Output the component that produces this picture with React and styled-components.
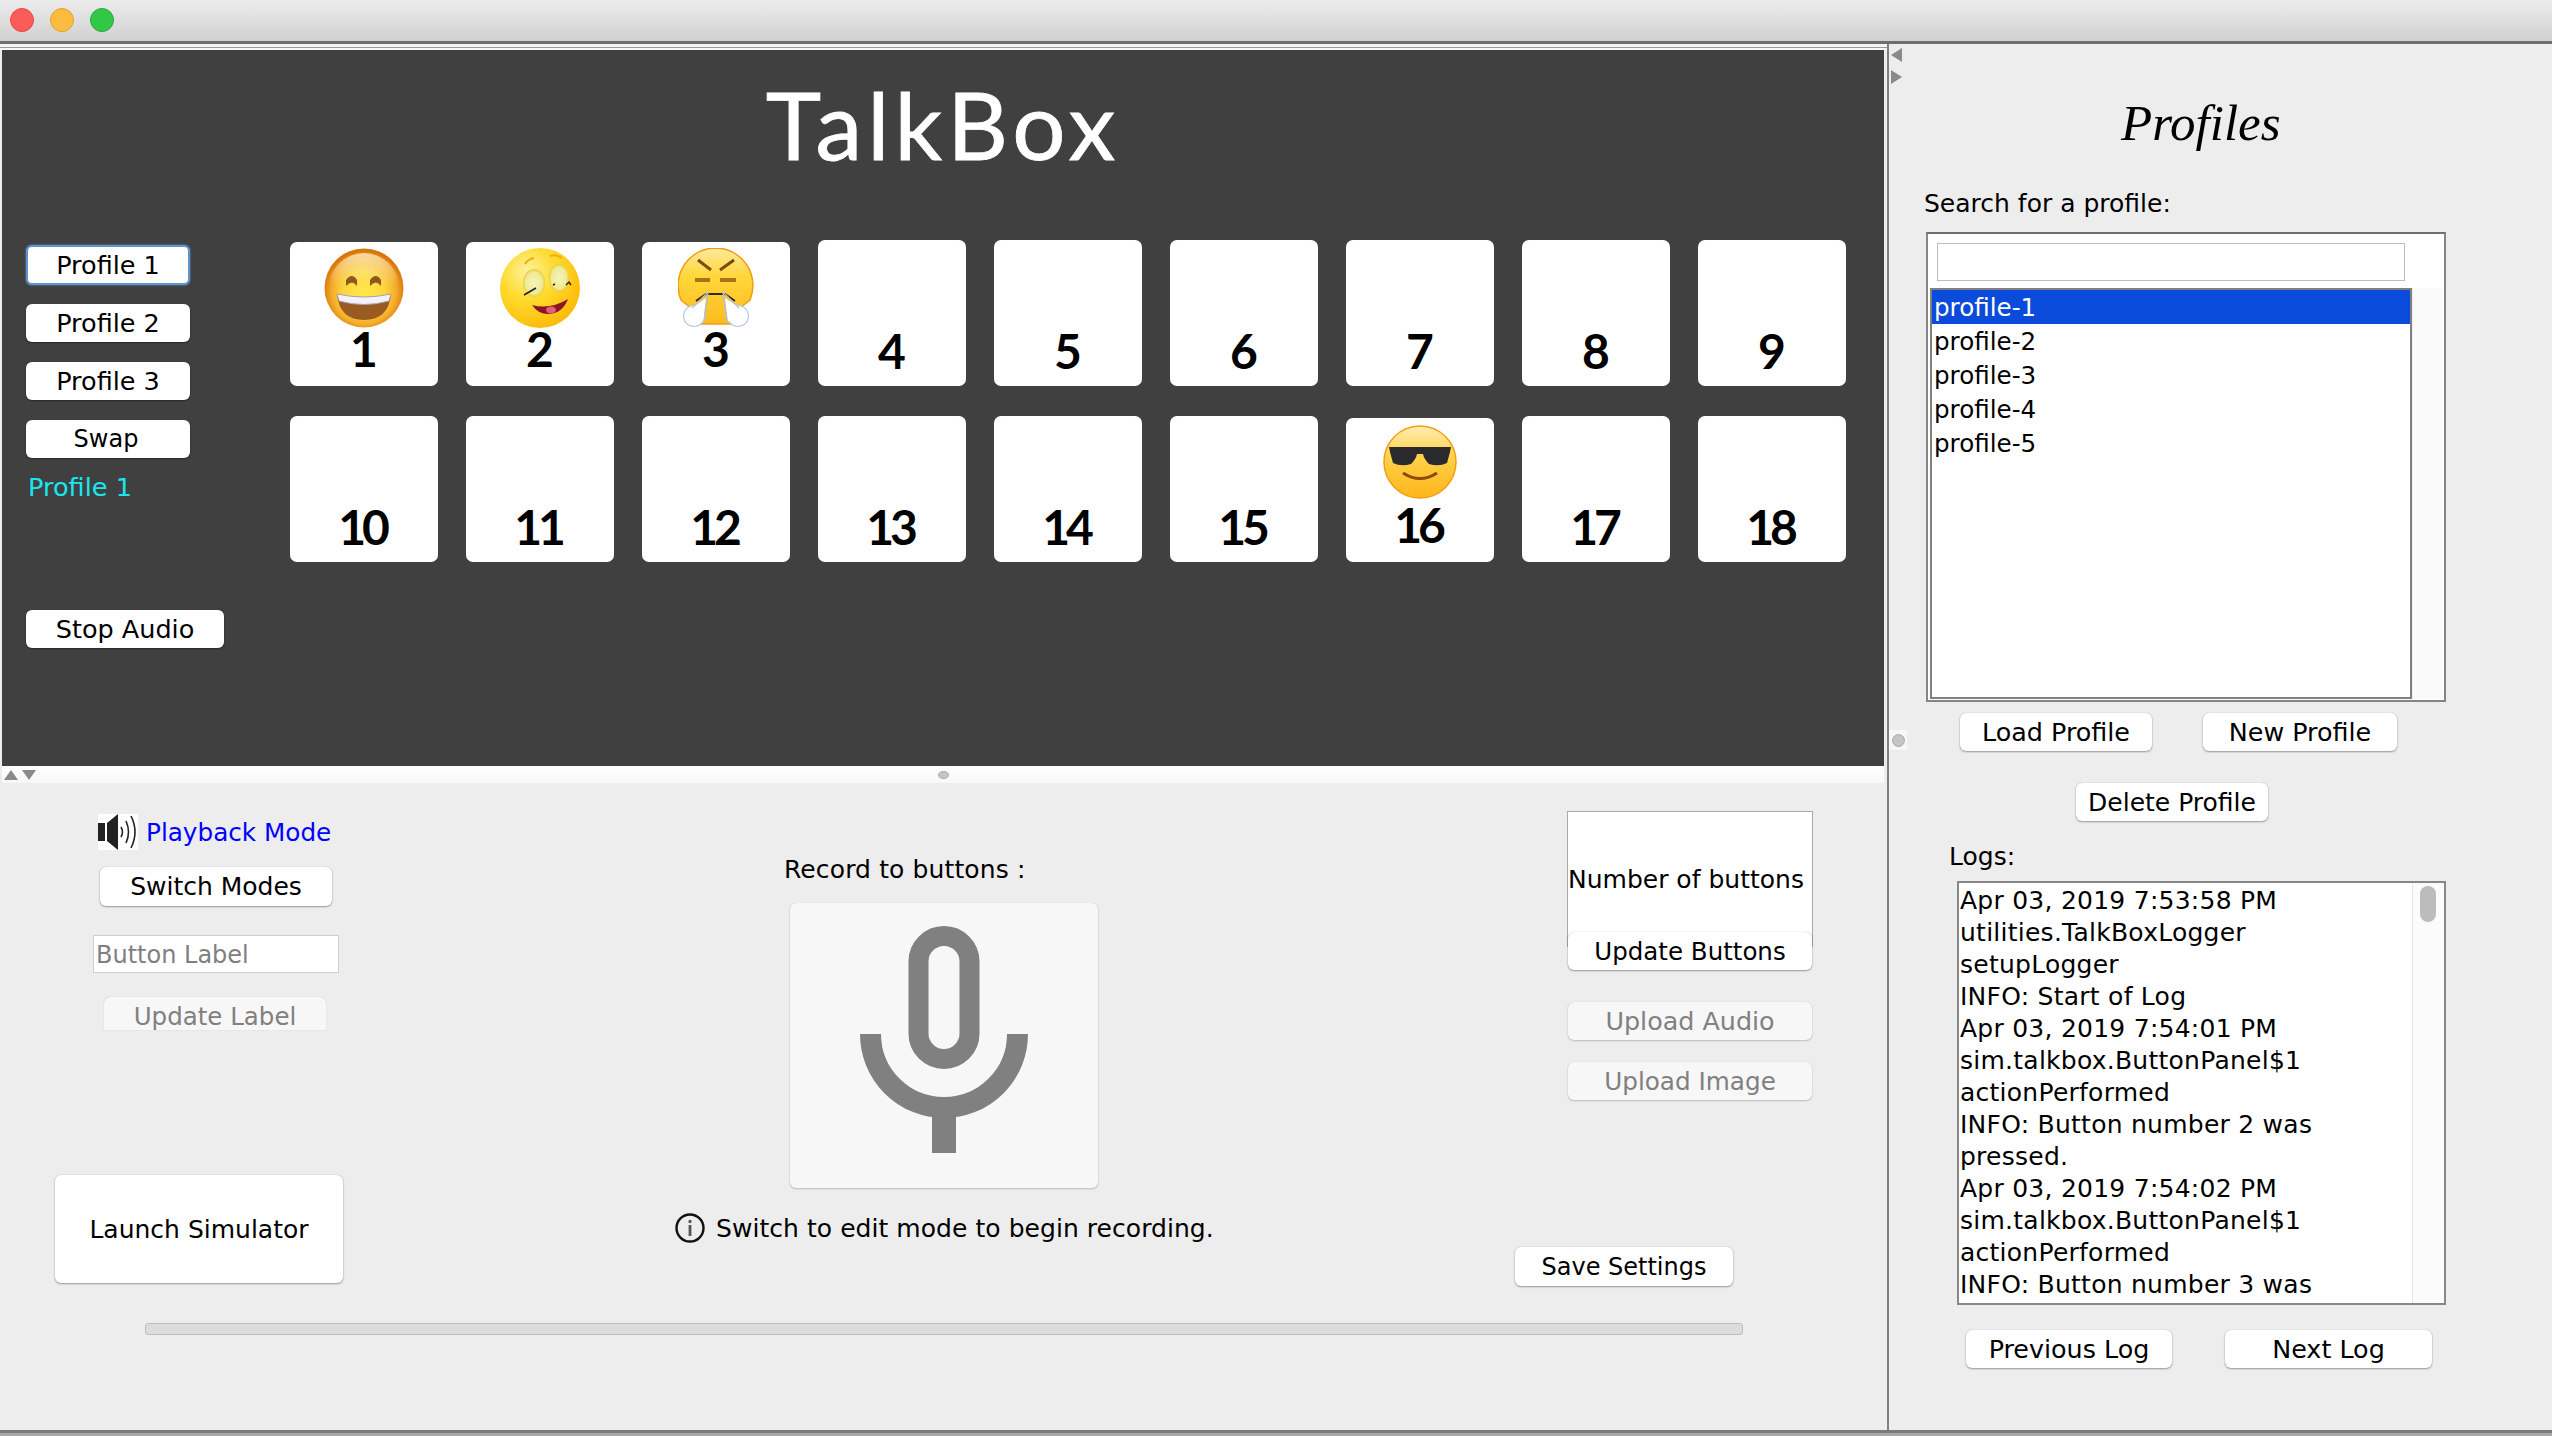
import styled, { createGlobalStyle } from "styled-components";

const GlobalStyle = createGlobalStyle`
  html, body {
    margin: 0;
    padding: 0;
    background: #ededed;
    overflow: hidden;
  }
  * {
    box-sizing: border-box;
  }
`;

const Window = styled.div`
  width: 2552px;
  height: 1436px;
  display: flex;
  flex-direction: column;
  padding-bottom: 3px;
  font-family: "DejaVu Sans", sans-serif;
  font-size: 25px;
  color: #000;
  background: #a8a8a8;
  overflow: hidden;
`;

const TitleBar = styled.div`
  height: 44px;
  flex: none;
  display: flex;
  align-items: flex-start;
  gap: 16px;
  padding: 8px 0 0 10px;
  background: linear-gradient(#ececec, #d0d0d0);
  border-bottom: 3px solid #6f6f6f;
`;

const Light = styled.span`
  width: 24px;
  height: 24px;
  border-radius: 50%;
  background: ${(p) => p.$color};
  border: 1px solid ${(p) => p.$edge};
`;

const Body = styled.div`
  flex: 1;
  display: flex;
  min-height: 0;
  border-bottom: 3px solid #7a7a7a;
`;

const LeftPane = styled.div`
  width: 1889px;
  flex: none;
  display: flex;
  flex-direction: column;
  padding: 6px 3px 0 2px;
  background: linear-gradient(#f6f6f6 3px, #9a9a9a 3px, #9a9a9a 4px, #f6f6f6 4px) no-repeat 0 0 / 100% 6px, #ededed;
  border-right: 2px solid #808080;
`;

/* top dark board */
const Board = styled.div`
  height: 716px;
  flex: none;
  padding: 24px 0 0 24px;
  background: #404040;
`;

const AppTitle = styled.h1`
  margin: 0 0 66px -24px;
  height: 100px;
  font-family: Lato, sans-serif;
  font-size: 94px;
  line-height: 100px;
  font-weight: 400;
  letter-spacing: 5px;
  text-align: center;
  color: #fff;
  -webkit-text-stroke: 0.8px #fff;
`;

const BoardRow = styled.div`
  display: flex;
`;

const SideColumn = styled.div`
  width: 264px;
  flex: none;
  display: flex;
  flex-direction: column;
  align-items: flex-start;
  padding-top: 5px;
`;

const Btn = styled.div`
  flex: none;
  display: flex;
  align-items: center;
  justify-content: center;
  width: ${(p) => p.$w}px;
  height: ${(p) => p.$h || 38}px;
  margin-left: ${(p) => p.$ml || 0}px;
  margin-top: ${(p) => p.$mt || 0}px;
  padding-right: ${(p) => p.$pr || 0}px;
  font-size: ${(p) => p.$fs || 25}px;
  background: #fff;
  border-radius: 6px;
  box-shadow: 0 1px 2px rgba(0, 0, 0, 0.35), 0 0 1px rgba(0, 0, 0, 0.25);
  white-space: nowrap;
`;

const FocusBtn = styled(Btn)`
  border: 2px solid #5f92d2;
  box-shadow: 0 0 2px #7fa9dd;
`;

const MutedBtn = styled(Btn)`
  background: #f7f7f7;
  color: #808080;
  box-shadow: 0 1px 2px rgba(0, 0, 0, 0.2), 0 0 1px rgba(0, 0, 0, 0.15);
`;

const ClippedBtn = styled(MutedBtn)`
  padding-top: 5px;
  border-radius: 6px 6px 0 0;
  box-shadow: 0 0 1px rgba(0, 0, 0, 0.25);
`;

const CurrentProfile = styled.div`
  margin: 14px 0 0 2px;
  height: 30px;
  line-height: 30px;
  font-size: 25.6px;
  color: #19e6ee;
`;

const CardGrid = styled.div`
  display: grid;
  grid-template-columns: repeat(9, 148px);
  grid-auto-rows: 146px;
  column-gap: 28px;
  row-gap: 30px;
`;

const Card = styled.div`
  align-self: end;
  height: ${(p) => (p.$short ? 144 : 146)}px;
  display: flex;
  flex-direction: column;
  align-items: center;
  justify-content: flex-end;
  padding-bottom: ${(p) => (p.$short ? 13 : 11)}px;
  background: #fff;
  border-radius: 7px;
`;

const CardNumber = styled.div`
  height: 48px;
  font-family: Lato, sans-serif;
  font-weight: 700;
  font-size: 48px;
  line-height: 48px;
  letter-spacing: ${(p) => (p.$wide ? -4 : 0)}px;
  padding-right: ${(p) => (p.$wide ? 4 : 0)}px;
`;

const EmojiSlot = styled.div`
  display: flex;
  margin-bottom: ${(p) => p.$gap}px;
`;

/* splitter under the board */
const Splitter = styled.div`
  height: 17px;
  flex: none;
  display: flex;
  align-items: center;
  gap: 4px;
  padding-left: 2px;
  position: relative;
  background: linear-gradient(#ffffff, #f7f7f7);
`;

const SplitDot = styled.span`
  position: absolute;
  left: 936px;
  top: 5px;
  width: 11px;
  height: 8px;
  border-radius: 50%;
  background: #c4c4c4;
  border: 1px solid #aaa;
`;

const Lower = styled.div`
  flex: 1;
  display: flex;
  flex-direction: column;
  min-height: 0;
`;

const LowerRow = styled.div`
  display: flex;
  align-items: flex-start;
`;

const LeftCol = styled.div`
  width: 673px;
  flex: none;
  display: flex;
  flex-direction: column;
`;

const ModeRow = styled.div`
  display: flex;
  align-items: center;
  gap: 8px;
  height: 36px;
  margin: 31px 0 0 96px;
  font-size: 24.7px;
  color: #0000ff;
`;

const LabelField = styled.div`
  width: 246px;
  height: 38px;
  margin: 29px 0 0 91px;
  padding-left: 2px;
  font-size: 24px;
  line-height: 38px;
  background: #fff;
  border: 1px solid #cfcfcf;
  color: #808080;
`;

const MidCol = styled.div`
  width: 840px;
  flex: none;
  display: flex;
  flex-direction: column;
`;

const RecordLabel = styled.div`
  height: 30px;
  line-height: 33px;
  margin: 70px 0 0 109px;
  letter-spacing: 0.12px;
`;

const MicCard = styled.div`
  width: 308px;
  height: 285px;
  margin: 20px 0 0 115px;
  padding-top: 23px;
  display: flex;
  justify-content: center;
  align-items: flex-start;
  background: #f7f7f7;
  border-radius: 6px;
  box-shadow: 0 1px 2px rgba(0, 0, 0, 0.2), 0 0 1px rgba(0, 0, 0, 0.15);
`;

const InfoRow = styled.div`
  display: flex;
  align-items: center;
  gap: 11px;
  height: 30px;
  margin-top: 25px;
  letter-spacing: 0.05px;
  white-space: nowrap;
`;

const RightCol = styled.div`
  width: 300px;
  flex: none;
  display: flex;
  flex-direction: column;
  align-items: flex-start;
`;

const CountBox = styled.div`
  width: 246px;
  height: 136px;
  margin: 28px 0 0 52px;
  padding-top: 52px;
  line-height: 32px;
  background: #fff;
  border: 1px solid #aaa;
  border-bottom: 0;
  white-space: nowrap;
  overflow: hidden;
`;

const OverlapBtn = styled(Btn)`
  position: relative;
`;

const ProgressBar = styled.div`
  width: 1598px;
  height: 12px;
  margin: 37px 0 0 143px;
  background: #dcdcdc;
  border: 1px solid #bdbdbd;
  border-radius: 3px;
`;

/* right side */
const RightPane = styled.div`
  flex: 1;
  position: relative;
  display: flex;
  flex-direction: column;
  background: #ededed;
`;

const RailArrows = styled.div`
  position: absolute;
  left: 2px;
  top: 4px;
  display: flex;
  flex-direction: column;
  gap: 8px;
`;

const RailDot = styled.div`
  position: absolute;
  left: 0;
  top: 686px;
  width: 18px;
  height: 20px;
  display: flex;
  align-items: center;
  justify-content: center;
  background: #f7f7f7;

  &::after {
    content: "";
    width: 11px;
    height: 11px;
    border-radius: 50%;
    background: #c4c4c4;
    border: 1px solid #aaa;
  }
`;

const ProfilesTitle = styled.h2`
  margin: 49px 0 0 232px;
  height: 59px;
  font-family: "Liberation Serif", serif;
  font-style: italic;
  font-weight: 400;
  font-size: 51px;
  line-height: 60px;
`;

const PaneLabel = styled.div`
  height: 30px;
  line-height: 33px;
  margin-top: ${(p) => p.$mt}px;
  margin-left: ${(p) => p.$ml}px;
`;

const ListBox = styled.div`
  width: 520px;
  height: 470px;
  margin: 15px 0 0 37px;
  display: flex;
  flex-direction: column;
  background: #fff;
  border: 2px solid #858585;
  border-top-color: #6f6f6f;
`;

const SearchField = styled.div`
  width: 468px;
  height: 38px;
  flex: none;
  margin: 9px 0 7px 9px;
  background: #fff;
  border: 1px solid #bdbdbd;
`;

const ListRow = styled.div`
  flex: 1;
  display: flex;
  margin: 0 1px 1px 2px;
  min-height: 0;
`;

const ProfileList = styled.div`
  width: 482px;
  flex: none;
  border: 2px solid #808080;
  background: #fff;
`;

const ProfileRow = styled.div`
  height: 34px;
  padding-left: 2px;
  font-size: 24.6px;
  line-height: 36px;
  background: ${(p) => (p.$selected ? "#0a4bdc" : "transparent")};
  color: ${(p) => (p.$selected ? "#fff" : "#000")};
`;

const ScrollTrack = styled.div`
  flex: 1;
  background: #fafafa;
  border-left: 1px solid #eeeeee;
`;

const ButtonRow = styled.div`
  display: flex;
  gap: ${(p) => p.$gap}px;
  margin-left: ${(p) => p.$ml}px;
  margin-top: ${(p) => p.$mt}px;
`;

const LogBox = styled.div`
  width: 489px;
  height: 424px;
  flex: none;
  margin: 11px 0 0 68px;
  display: flex;
  background: #fff;
  border: 2px solid #888;
  overflow: hidden;
`;

const LogText = styled.div`
  width: 453px;
  flex: none;
  padding: 2px 0 0 1px;
  line-height: 32px;
  letter-spacing: 0.25px;
  white-space: nowrap;
`;

const LogTrack = styled.div`
  flex: 1;
  padding: 3px 0 0 7px;
  background: #fbfbfb;
  border-left: 1px solid #e6e6e6;
`;

const LogThumb = styled.div`
  width: 16px;
  height: 36px;
  border-radius: 8px;
  background: #bcbcbc;
`;

const Arrow = ({ dir }) => {
  const shapes = {
    up: "0,10 7,0 14,10",
    down: "0,0 14,0 7,10",
  };
  return (
    <svg width="14" height="10">
      <polygon points={shapes[dir]} fill="#8a8a8a" />
    </svg>
  );
};

const SideArrow = ({ dir }) => (
  <svg width="11" height="14">
    <polygon points={dir === "left" ? "11,0 0,7 11,14" : "0,0 11,7 0,14"} fill="#8a8a8a" />
  </svg>
);

const SpeakerIcon = () => (
  <svg width="40" height="36" viewBox="0 0 40 36">
    <rect width="40" height="36" fill="#fff" />
    <rect x="0" y="9" width="7" height="18" fill="#222" />
    <polygon points="9,9 20,0 20,36 9,27" fill="#222" />
    <g fill="none" stroke="#222" strokeWidth="1.6">
      <path d="M23 13 Q26 18 23 23" />
      <path d="M28 7 Q33 18 28 29" />
      <path d="M33 2 Q41 18 33 34" />
    </g>
  </svg>
);

const MicIcon = () => (
  <svg width="168" height="227" viewBox="0 0 168 227" fill="none">
    <rect x="58.5" y="10" width="51" height="123" rx="25.5" stroke="#808080" strokeWidth="20" />
    <path d="M10.5 108 A73.5 73.5 0 0 0 157.5 108" stroke="#808080" strokeWidth="21" />
    <rect x="72" y="172" width="24" height="55" fill="#808080" />
  </svg>
);

const InfoIcon = () => (
  <svg width="30" height="30" viewBox="0 0 30 30" fill="none">
    <circle cx="15" cy="15" r="13.5" stroke="#111" strokeWidth="2.4" />
    <rect x="13.6" y="7" width="2.8" height="3" fill="#555" />
    <rect x="13.6" y="12" width="2.8" height="11" fill="#555" />
  </svg>
);

const GrinEmoji = () => (
  <svg width="80" height="80" viewBox="0 0 80 80">
    <defs>
      <radialGradient id="grinFace" cx="50%" cy="55%" r="52%">
        <stop offset="0%" stopColor="#ffe94a" />
        <stop offset="50%" stopColor="#fdd63f" />
        <stop offset="78%" stopColor="#f4ae2c" />
        <stop offset="100%" stopColor="#d9740a" />
      </radialGradient>
      <linearGradient id="grinGlow" x1="0" y1="0" x2="0" y2="1">
        <stop offset="0%" stopColor="#fff6d0" stopOpacity="0.75" />
        <stop offset="45%" stopColor="#fff6d0" stopOpacity="0" />
      </linearGradient>
    </defs>
    <circle cx="40" cy="40" r="39.5" fill="url(#grinFace)" />
    <circle cx="40" cy="40" r="35" fill="url(#grinGlow)" />
    <path d="M22 38 V32 Q28 24 33 32 V38 Q28 31 22 38Z" fill="#93561f" />
    <path d="M46 38 V32 Q52 24 57 32 V38 Q52 31 46 38Z" fill="#93561f" />
    <path d="M13 47 Q40 54 67 47 Q64 72 40 72 Q16 72 13 47Z" fill="#9a5b22" />
    <path d="M13 46 Q40 52 67 46 L65 53 Q40 60 15 53Z" fill="#f4f2f6" stroke="#a8a0a8" strokeWidth="1" />
  </svg>
);

const TongueEmoji = () => (
  <svg width="80" height="80" viewBox="0 0 80 80">
    <defs>
      <radialGradient id="tongueFace" cx="35%" cy="30%" r="75%">
        <stop offset="0%" stopColor="#fff2a2" />
        <stop offset="45%" stopColor="#ffdb2e" />
        <stop offset="100%" stopColor="#fcb908" />
      </radialGradient>
      <radialGradient id="tongueEye" cx="50%" cy="50%" r="55%">
        <stop offset="0%" stopColor="#f5f5bc" />
        <stop offset="70%" stopColor="#eeea95" />
        <stop offset="100%" stopColor="#e6bf10" />
      </radialGradient>
    </defs>
    <circle cx="40" cy="40" r="40" fill="url(#tongueFace)" />
    <ellipse cx="34" cy="35" rx="11" ry="14" fill="url(#tongueEye)" />
    <ellipse cx="59" cy="30" rx="10" ry="14" fill="url(#tongueEye)" />
    <path d="M25 16 Q28 11 34 10" fill="none" stroke="#eeaf12" strokeWidth="2" />
    <path d="M50 8 Q56 6 62 10" fill="none" stroke="#eeaf12" strokeWidth="2" />
    <path d="M24 47 L36 40" stroke="#222" strokeWidth="1.6" />
    <path d="M53 37 L55 36 M66 37 L69 34 L71 37" fill="none" stroke="#222" strokeWidth="1.4" />
    <path d="M32 57 Q50 62 68 51 Q62 66 48 66 Q38 66 32 57Z" fill="#8b1428" />
    <ellipse cx="51" cy="62" rx="5" ry="3.5" fill="#e0607a" />
  </svg>
);

const AngryEmoji = () => (
  <svg width="76" height="80" viewBox="0 0 76 80">
    <defs>
      <linearGradient id="angryFace" x1="0" y1="0" x2="0" y2="1">
        <stop offset="0%" stopColor="#ffe9a0" />
        <stop offset="35%" stopColor="#ffd83c" />
        <stop offset="100%" stopColor="#fdbb1c" />
      </linearGradient>
    </defs>
    <path d="M37.5 0 A37.5 37.5 0 0 1 72 52 L62 60 L56 76 H20 L13 60 L3 52 A37.5 37.5 0 0 1 37.5 0Z" fill="url(#angryFace)" stroke="#f59b12" strokeWidth="1.5" />
    <path d="M20 12 L33 22 M56 12 L42 22" stroke="#7a4a12" strokeWidth="3" />
    <path d="M17 32 H32 M42 32 H58" stroke="#a8741a" strokeWidth="4" />
    <path d="M18 53 L28 46 H47 L57 53" fill="none" stroke="#3a2508" strokeWidth="2" />
    <ellipse cx="16" cy="68" rx="10.5" ry="10.5" fill="#fff" stroke="#b8cbe8" strokeWidth="1.2" />
    <ellipse cx="60" cy="68" rx="10.5" ry="10.5" fill="#fff" stroke="#b8cbe8" strokeWidth="1.2" />
    <path d="M28 50 L25 74 L14 60 Z" fill="#fff" />
    <path d="M47 50 L50 74 L62 60 Z" fill="#fff" />
    <path d="M30 44 L26 74 M45 44 L49 74" stroke="#a9c1e6" strokeWidth="1.4" />
    <path d="M29 45 L14 60 M46 45 L61 60" stroke="#a9c1e6" strokeWidth="1.2" />
  </svg>
);

const CoolEmoji = () => (
  <svg width="74" height="74" viewBox="0 0 74 74">
    <defs>
      <linearGradient id="coolFace" x1="0" y1="0" x2="0" y2="1">
        <stop offset="0%" stopColor="#ffeeb4" />
        <stop offset="40%" stopColor="#ffd24c" />
        <stop offset="100%" stopColor="#fdb61a" />
      </linearGradient>
    </defs>
    <circle cx="37" cy="37" r="36" fill="url(#coolFace)" stroke="#f59e12" strokeWidth="1.5" />
    <path d="M6 22 H68 L67 27 L64 38 Q56 42 46 39 Q41 34 40 29 H34 Q33 34 28 39 Q18 42 10 38 L7 27Z" fill="#2a2a2c" />
    <path d="M20 48 Q37 59 54 48" fill="none" stroke="#8c4b08" strokeWidth="3" />
  </svg>
);

const BOARD = Array.from({ length: 18 }, (_, i) => i + 1);

const EMOJI = {
  1: { icon: <GrinEmoji />, gap: -3 },
  2: { icon: <TongueEmoji />, gap: -3 },
  3: { icon: <AngryEmoji />, gap: -3 },
  16: { icon: <CoolEmoji />, gap: 2 },
};

const PROFILES = ["profile-1", "profile-2", "profile-3", "profile-4", "profile-5"];

const LOG_LINES = [
  "Apr 03, 2019 7:53:58 PM",
  "utilities.TalkBoxLogger",
  "setupLogger",
  "INFO: Start of Log",
  "Apr 03, 2019 7:54:01 PM",
  "sim.talkbox.ButtonPanel$1",
  "actionPerformed",
  "INFO: Button number 2 was",
  "pressed.",
  "Apr 03, 2019 7:54:02 PM",
  "sim.talkbox.ButtonPanel$1",
  "actionPerformed",
  "INFO: Button number 3 was",
];

export default function App() {
  return (
    <Window>
      <GlobalStyle />
      <TitleBar>
        <Light $color="#fc5c57" $edge="#e5483f" />
        <Light $color="#fdbc40" $edge="#e3a22e" />
        <Light $color="#33c748" $edge="#27aa35" />
      </TitleBar>
      <Body>
        <LeftPane>
          <Board>
            <AppTitle>TalkBox</AppTitle>
            <BoardRow>
              <SideColumn>
                <FocusBtn $w={164} $h={40} $fs={25.5}>Profile 1</FocusBtn>
                <Btn $w={164} $mt={19} $fs={25.5}>Profile 2</Btn>
                <Btn $w={164} $mt={20} $fs={25.5}>Profile 3</Btn>
                <Btn $w={164} $mt={20} $fs={24} $pr={4}>Swap</Btn>
                <CurrentProfile>Profile 1</CurrentProfile>
                <Btn $w={198} $mt={108} $fs={25.5}>Stop Audio</Btn>
              </SideColumn>
              <CardGrid>
                {BOARD.map((n) => (
                  <Card key={n} $short={Boolean(EMOJI[n])}>
                    {EMOJI[n] && <EmojiSlot $gap={EMOJI[n].gap}>{EMOJI[n].icon}</EmojiSlot>}
                    <CardNumber $wide={n > 9}>{n}</CardNumber>
                  </Card>
                ))}
              </CardGrid>
            </BoardRow>
          </Board>
          <Splitter>
            <Arrow dir="up" />
            <Arrow dir="down" />
            <SplitDot />
          </Splitter>
          <Lower>
            <LowerRow>
              <LeftCol>
                <ModeRow>
                  <SpeakerIcon />
                  Playback Mode
                </ModeRow>
                <Btn $w={232} $h={39} $ml={98} $mt={17}>Switch Modes</Btn>
                <LabelField>Button Label</LabelField>
                <ClippedBtn $w={222} $h={33} $ml={102} $mt={24} $fs={24.5}>Update Label</ClippedBtn>
                <Btn $w={288} $h={108} $ml={53} $mt={145}>Launch Simulator</Btn>
              </LeftCol>
              <MidCol>
                <RecordLabel>Record to buttons :</RecordLabel>
                <MicCard>
                  <MicIcon />
                </MicCard>
                <InfoRow>
                  <InfoIcon />
                  Switch to edit mode to begin recording.
                </InfoRow>
              </MidCol>
              <RightCol>
                <CountBox>Number of buttons</CountBox>
                <OverlapBtn $w={244} $ml={53} $mt={-15} $fs={24.5}>Update Buttons</OverlapBtn>
                <MutedBtn $w={244} $ml={53} $mt={32} $fs={25.4}>Upload Audio</MutedBtn>
                <MutedBtn $w={244} $ml={53} $mt={22} $fs={24.7}>Upload Image</MutedBtn>
                <Btn $w={218} $h={39} $mt={147} $fs={24}>Save Settings</Btn>
              </RightCol>
            </LowerRow>
            <ProgressBar />
          </Lower>
        </LeftPane>
        <RightPane>
          <RailArrows>
            <SideArrow dir="left" />
            <SideArrow dir="right" />
          </RailArrows>
          <RailDot />
          <ProfilesTitle>Profiles</ProfilesTitle>
          <PaneLabel $mt={35} $ml={35}>Search for a profile:</PaneLabel>
          <ListBox>
            <SearchField />
            <ListRow>
              <ProfileList>
                {PROFILES.map((name, i) => (
                  <ProfileRow key={name} $selected={i === 0}>{name}</ProfileRow>
                ))}
              </ProfileList>
              <ScrollTrack />
            </ListRow>
          </ListBox>
          <ButtonRow $ml={71} $mt={11} $gap={51}>
            <Btn $w={192} $fs={25.4}>Load Profile</Btn>
            <Btn $w={194} $fs={25.4}>New Profile</Btn>
          </ButtonRow>
          <ButtonRow $ml={187} $mt={32} $gap={0}>
            <Btn $w={192}>Delete Profile</Btn>
          </ButtonRow>
          <PaneLabel $mt={19} $ml={60}>Logs:</PaneLabel>
          <LogBox>
            <LogText>
              {LOG_LINES.map((line, i) => (
                <div key={i}>{line}</div>
              ))}
            </LogText>
            <LogTrack>
              <LogThumb />
            </LogTrack>
          </LogBox>
          <ButtonRow $ml={77} $mt={25} $gap={53}>
            <Btn $w={206} $fs={25.4}>Previous Log</Btn>
            <Btn $w={207} $fs={25.4}>Next Log</Btn>
          </ButtonRow>
        </RightPane>
      </Body>
    </Window>
  );
}
